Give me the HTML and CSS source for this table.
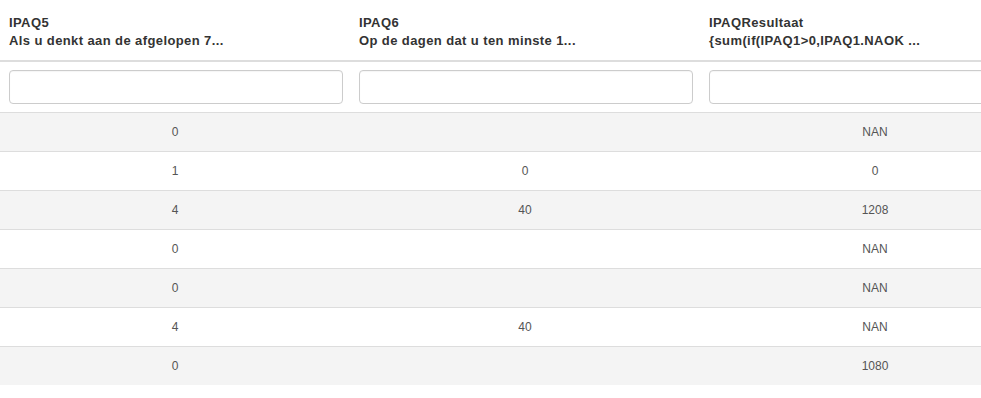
FILE: index.html
```html
<!DOCTYPE html>
<html>
<head>
<meta charset="utf-8">
<link rel="stylesheet" href="styles.css">
</head>
<body>
<table class="grid">
  <thead>
    <tr class="head">
      <th>IPAQ5<br>Als u denkt aan de afgelopen 7...</th>
      <th>IPAQ6<br>Op de dagen dat u ten minste 1...</th>
      <th>IPAQResultaat<br>{sum(if(IPAQ1&gt;0,IPAQ1.NAOK ...</th>
    </tr>
    <tr class="filter">
      <td><input class="filter-input" type="text"></td>
      <td><input class="filter-input" type="text"></td>
      <td><input class="filter-input" type="text"></td>
    </tr>
  </thead>
  <tbody>
    <tr><td>0</td><td></td><td>NAN</td></tr>
    <tr><td>1</td><td>0</td><td>0</td></tr>
    <tr><td>4</td><td>40</td><td>1208</td></tr>
    <tr><td>0</td><td></td><td>NAN</td></tr>
    <tr><td>0</td><td></td><td>NAN</td></tr>
    <tr><td>4</td><td>40</td><td>NAN</td></tr>
    <tr><td>0</td><td></td><td>1080</td></tr>
  </tbody>
</table>
</body>
</html>
```

FILE: styles.css
```css
html, body {
  margin: 0;
  padding: 0;
  background: #fff;
  overflow: hidden;
}

body {
  font-family: "Liberation Sans", Arial, sans-serif;
  font-size: 12px;
  color: #555;
}

.grid {
  width: 1050px;
  table-layout: fixed;
  border-collapse: separate;
  border-spacing: 0;
}

.grid th,
.grid td {
  width: 350px;
  box-sizing: border-box;
}

.head th {
  text-align: left;
  font-weight: bold;
  font-size: 13px;
  letter-spacing: 0.4px;
  color: #333;
  line-height: 18px;
  padding: 14px 7px 10px 9px;
  border-bottom: 2px solid #ddd;
  white-space: nowrap;
}

.filter td {
  padding: 8px 7px 8px 9px;
  border-bottom: 1px solid #ddd;
}

.filter-input {
  display: block;
  width: 334px;
  height: 34px;
  box-sizing: border-box;
  margin: 0;
  border: 1px solid #ccc;
  border-radius: 4px;
  background: #fff;
  box-shadow: inset 0 1px 1px rgba(0,0,0,0.04);
}

tbody td {
  height: 39px;
  padding: 0;
  text-align: center;
  vertical-align: middle;
  border-bottom: 1px solid #ddd;
  color: #555;
}

tbody tr:nth-child(odd) td {
  background: #f4f4f4;
}

tbody tr:last-child td {
  border-bottom: none;
  height: 38px;
}
```
